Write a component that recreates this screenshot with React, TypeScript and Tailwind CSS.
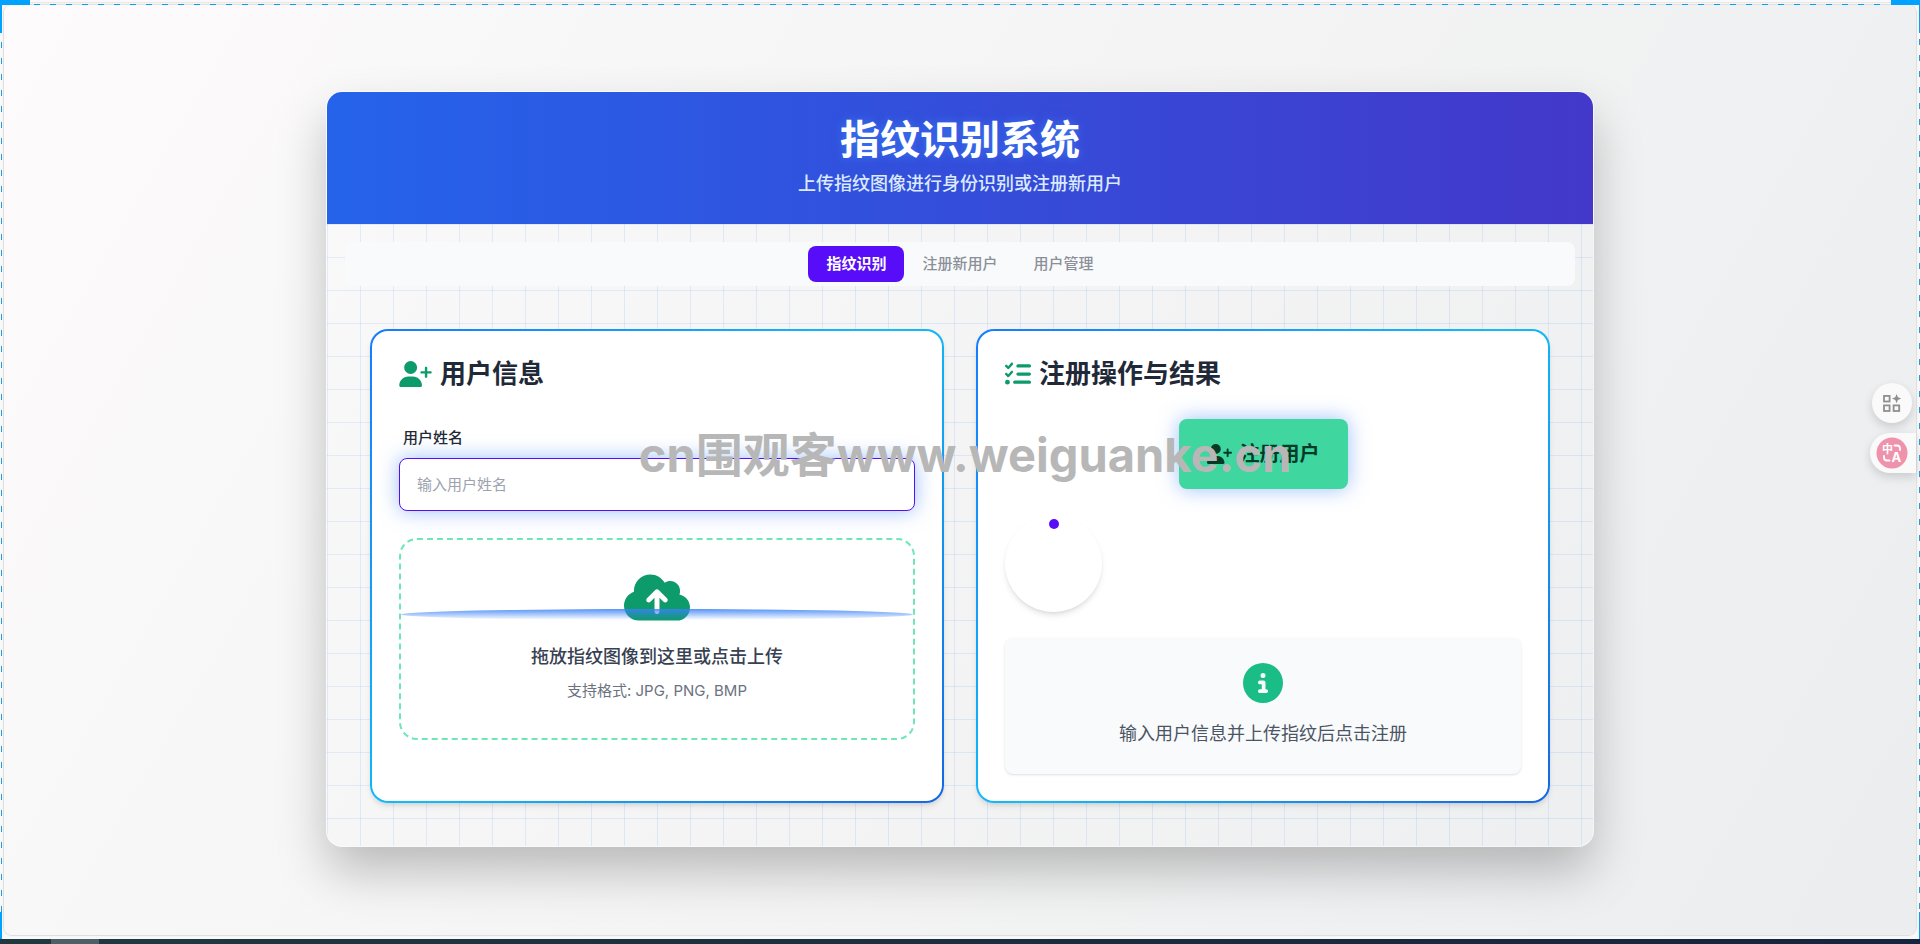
import React, { useState } from 'react';
import { FaCircleInfo, FaCloudArrowUp, FaListCheck, FaUserPlus } from 'react-icons/fa6';

const tabs = ['指纹识别', '注册新用户', '用户管理'];

// Tarjeta con borde degradado
const GradientCard: React.FC<{ children: React.ReactNode }> = ({ children }) => (
  <section className="flex rounded-[18px] bg-[linear-gradient(135deg,#167bff,#12bdf5,#1566e4)] p-0.5 shadow-md">
    <div className="min-w-0 flex-1 rounded-2xl bg-white p-[27px]">{children}</div>
  </section>
);

const CardTitle: React.FC<{ icon: React.ReactNode; children: React.ReactNode }> = ({ icon, children }) => (
  <h2 className="flex items-center gap-2 text-[26px] leading-8 font-bold text-[#1f2937]">
    {icon}
    {children}
  </h2>
);

const GridSparkleIcon = () => (
  <svg viewBox="0 0 20 20" className="size-5" fill="none" stroke="#8f8f8f" strokeWidth="1.8">
    <rect x="2" y="2.9" width="5.6" height="5.6" />
    <rect x="2" y="12.4" width="5.6" height="5.6" />
    <rect x="11.6" y="12.4" width="5.6" height="5.6" />
    <path d="M14.6 1 L15.9 4.3 L19.2 5.6 L15.9 6.9 L14.6 10.2 L13.3 6.9 L10 5.6 L13.3 4.3 Z" fill="#8f8f8f" stroke="none" />
  </svg>
);

const TranslateIcon = () => (
  <svg viewBox="0 0 32 32" className="size-8" fill="none" stroke="#fff" strokeWidth="1.8" strokeLinecap="round">
    <circle cx="16" cy="16" r="15.5" fill="#ef93ad" stroke="none" />
    <path d="M18.5 8.5 h2.5 a3 3 0 0 1 3 3 v1.5" />
    <path d="M8 19 v1.5 a3 3 0 0 0 3 3 h2.5" />
    <text x="6" y="16" fontSize="11" fontWeight="700" fill="#fff" stroke="none">中</text>
    <text x="15.5" y="24.5" fontSize="13" fontWeight="700" fill="#fff" stroke="none">A</text>
  </svg>
);

// Marco de selección alrededor de la página
const SelectionFrame = () => (
  <div className="pointer-events-none absolute inset-0" aria-hidden="true">
    <div className="absolute inset-x-0 top-0.5 h-px bg-[#e8e8e8]" />
    <div className="absolute top-1 right-8 left-[34px] h-px bg-[repeating-linear-gradient(90deg,#0a9df5_0_6px,transparent_6px_16px)]" />
    <div className="absolute top-[42px] bottom-[27px] left-px w-px bg-[repeating-linear-gradient(180deg,#1f9ee0_0_6px,transparent_6px_16px)]" />
    <div className="absolute top-[39px] right-0 bottom-[27px] w-px bg-[repeating-linear-gradient(180deg,#1f9ee0_0_6px,transparent_6px_16px)]" />
    <div className="absolute top-0 left-0 h-[5px] w-[30px] bg-[#00a2ff]" />
    <div className="absolute top-0 left-0 h-[33px] w-0.5 bg-[#00a2ff]" />
    <div className="absolute top-0 right-0 h-[5px] w-[29px] bg-[#00a2ff]" />
    <div className="absolute top-0 right-0 h-[33px] w-px bg-[#00a2ff]" />
    <div className="absolute bottom-[5px] left-0 h-[27px] w-0.5 bg-[#00a2ff]" />
    <div className="absolute right-0 bottom-[5px] h-[27px] w-px bg-[#00a2ff]" />
  </div>
);

const App: React.FC = () => {
  const [activeTab, setActiveTab] = useState(tabs[0]);
  const [name, setName] = useState('');

  return (
    <div className="relative flex min-h-screen flex-col overflow-hidden bg-[#f9f9f9] font-['Inter','Noto_Sans_CJK_SC',sans-serif]">
      <main className="relative mx-1 mt-[5px] mb-1 flex flex-1 items-center justify-center rounded-lg bg-[linear-gradient(120deg,#fdfbfb,#ebedee)] px-4 pt-8 pb-[34px] shadow-[0_0_1px_1px_#dcdcde]">
        <div className="w-full max-w-[1268px] overflow-hidden rounded-2xl border border-white/40 shadow-[0_25px_50px_-2px_rgba(0,0,0,0.25)]">
          {/* Header */}
          <header className="bg-[linear-gradient(to_right,#2563eb,#4338ca)] py-[26px] text-center">
            <h1 className="text-[40px] leading-[44px] font-bold text-white [text-shadow:0_0_10px_rgba(59,130,246,0.8)]">指纹识别系统</h1>
            <p className="mt-2 text-[18px] leading-7 font-medium text-[#dbeafe]">上传指纹图像进行身份识别或注册新用户</p>
          </header>

          <div className="bg-[linear-gradient(rgba(59,130,246,0.12)_1px,transparent_1px),linear-gradient(90deg,rgba(59,130,246,0.12)_1px,transparent_1px)] bg-size-[33px_33px] p-[18px]">
            <nav className="flex justify-center rounded-lg bg-[#f9fafc] p-1">
              {tabs.map((tab) => (
                <button
                  key={tab}
                  type="button"
                  onClick={() => setActiveTab(tab)}
                  className={
                    tab === activeTab
                      ? 'h-9 rounded-lg bg-[#570df8] px-[18px] text-[15px] font-bold text-white'
                      : 'h-9 rounded-lg px-[18px] text-[15px] font-medium text-[#8b8f98]'
                  }
                >
                  {tab}
                </button>
              ))}
            </nav>

            <div className="mt-[18px] grid grid-cols-1 gap-8 p-[25px] lg:grid-cols-2">
              {/* Datos del usuario */}
              <GradientCard>
                <CardTitle icon={<FaUserPlus className="h-[26px] w-[33px] text-[#0d9b6c]" />}>用户信息</CardTitle>
                <label htmlFor="user-name" className="mt-9 block px-1 text-[15px] leading-6 font-medium text-[#1f2937]">
                  用户姓名
                </label>
                <input
                  id="user-name"
                  type="text"
                  value={name}
                  onChange={(e) => setName(e.target.value)}
                  placeholder="输入用户姓名"
                  className="mt-2 block h-[53px] w-full rounded-lg border border-[#570df8] bg-white px-[17px] text-[15px] shadow-[0_0_20px_rgba(59,130,246,0.5)] outline-none placeholder:text-[#9ca3af]"
                />
                <label className="relative mt-[27px] flex cursor-pointer flex-col items-center rounded-[18px] border-2 border-dashed border-[#6ee7b7] pt-[31px] pb-[35px]">
                  <input type="file" accept=".jpg,.png,.bmp" className="sr-only" />
                  <FaCloudArrowUp className="h-[53px] w-[66px] text-[#0d9b6c]" />
                  <span className="mt-[19px] text-[18px] leading-7 font-medium text-[#374151]">拖放指纹图像到这里或点击上传</span>
                  <span className="mt-2 text-[15px] leading-6 text-[#6b7280]">支持格式: JPG, PNG, BMP</span>
                  <span className="absolute inset-x-0 top-[69px] h-[11px] rounded-[50%] bg-[linear-gradient(to_bottom,rgba(59,130,246,0.85),rgba(59,130,246,0))]" />
                </label>
              </GradientCard>

              {/* Registro y resultado */}
              <GradientCard>
                <CardTitle icon={<FaListCheck className="size-[26px] text-[#0d9b6c]" />}>注册操作与结果</CardTitle>
                <div className="mt-[29px] flex justify-center">
                  <button
                    type="button"
                    className="flex h-[70px] items-center gap-2 rounded-lg bg-[#3fd69f] px-7 text-[20px] font-semibold text-[#043a28] shadow-[0_0_20px_rgba(59,130,246,0.5)]"
                  >
                    <FaUserPlus className="h-5 w-[25px]" />
                    注册用户
                  </button>
                </div>
                <div className="mt-[26px] flex size-[97px] justify-center rounded-full bg-white pt-1 shadow-md">
                  <span className="size-[10px] rounded-full bg-[#570df8]" />
                </div>
                <div className="mt-[26px] flex flex-col items-center rounded-lg bg-[#f9fafc] pt-[25px] pb-[26px] shadow-sm">
                  <FaCircleInfo className="size-10 text-[#19bd85]" />
                  <p className="mt-[17px] text-[18px] leading-7 text-[#4b5563]">输入用户信息并上传指纹后点击注册</p>
                </div>
              </GradientCard>
            </div>
          </div>
        </div>

        {/* Botones flotantes */}
        <div className="absolute top-[378px] right-0 flex flex-col items-end gap-[10px]">
          <button type="button" aria-label="工具" className="mr-1 flex size-10 items-center justify-center rounded-full bg-[#fafafa] shadow-[0_4px_10px_rgba(0,0,0,0.15)]">
            <GridSparkleIcon />
          </button>
          <button type="button" aria-label="翻译" className="flex h-10 w-[46px] items-center rounded-l-full bg-[#fafafa] pl-[6px] shadow-[0_4px_10px_rgba(0,0,0,0.15)]">
            <TranslateIcon />
          </button>
        </div>

        {/* Marca de agua */}
        <div className="pointer-events-none absolute inset-x-0 top-[418px] flex justify-center">
          <span className="mr-[-10px] text-[47px] leading-[64px] font-bold whitespace-nowrap text-[#b7b7b7]">cn围观客www.weiguanke.cn</span>
        </div>
      </main>

      <footer className="flex h-[5px] bg-[linear-gradient(to_right,#20393f,#16243f)]">
        <span className="ml-[51px] w-12 bg-[#4c6066]" />
      </footer>
      <SelectionFrame />
    </div>
  );
};

export default App;
